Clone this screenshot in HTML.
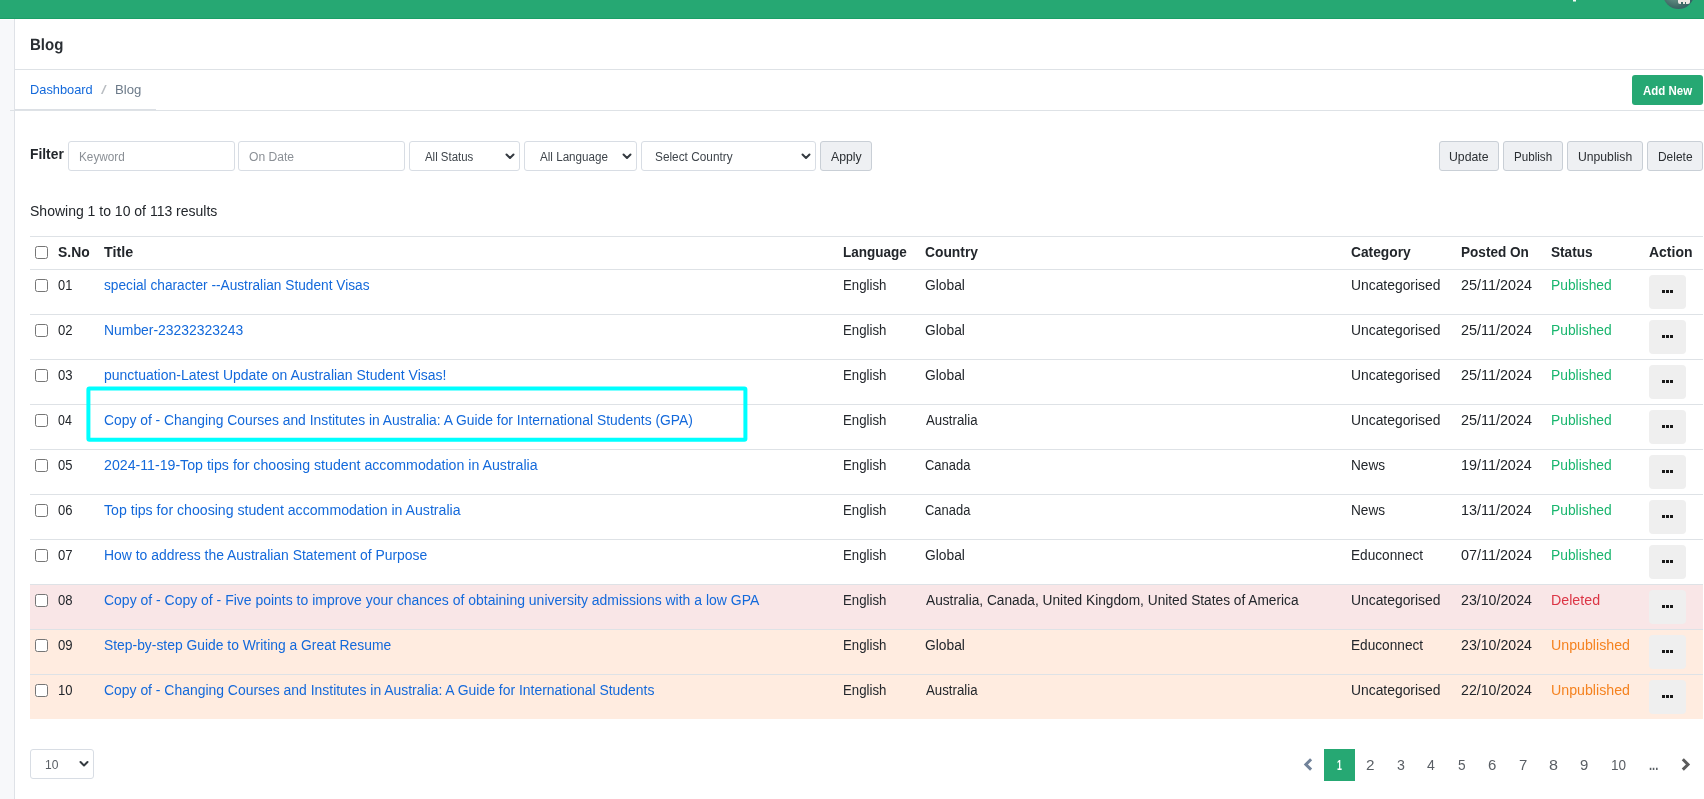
<!DOCTYPE html>
<html><head><meta charset="utf-8"><title>Blog</title>
<style>
html,body{margin:0;padding:0;background:#fff;}
body{width:1704px;height:799px;position:relative;overflow:hidden;font-family:"Liberation Sans",sans-serif;}
.b{position:absolute;}
.t{position:absolute;white-space:nowrap;line-height:1;transform-origin:0 50%;}
</style></head><body>
<div class="b" style="left:0px;top:0px;width:1704px;height:18px;background:#26a873"></div>
<div class="b" style="left:0px;top:18px;width:1704px;height:1px;background:#1b9f67"></div>
<div class="b" style="left:1573px;top:0px;width:3px;height:1px;background:#f4fbf8"></div>
<div class="b" style="left:1573px;top:1px;width:3px;height:1px;background:#8fd3b6"></div>
<div class="b" style="left:1662.8px;top:-22px;width:30.8px;height:30.8px;border-radius:50%;background:radial-gradient(circle at 40% 45%,#8fb0a0 0%,#5f8a80 30%,#3f6a66 60%,#2a4a5e 100%);overflow:hidden"><div class="b" style="left:15.5px;top:20px;width:11.5px;height:5.5px;background:#efe9e4;border-radius:1px 1px 2px 2px"></div><div class="b" style="left:18.6px;top:23.5px;width:1.2px;height:3px;background:#3f6a66"></div><div class="b" style="left:22.4px;top:23.5px;width:1.2px;height:3px;background:#3f6a66"></div></div>
<div class="b" style="left:0px;top:20px;width:14px;height:779px;background:#f7f8fa"></div>
<div class="b" style="left:14px;top:19px;width:1px;height:780px;background:#dfe2e7"></div>
<div class="b" style="left:15px;top:69px;width:1689px;height:1px;background:#dee2e6"></div>
<div class="b" style="left:10px;top:110px;width:1694px;height:1px;background:#dee2e6"></div>
<div class="b" style="left:15px;top:109px;width:141px;height:1px;background:#dce0e5"></div>
<div class="b" style="left:1632px;top:75px;width:71px;height:30px;background:#26a873;border-radius:3px"></div>
<div class="b" style="left:68px;top:141px;width:167px;height:30px;border:1px solid #d8dde4;border-radius:3px;box-sizing:border-box;background:#fff"></div>
<div class="b" style="left:238px;top:141px;width:167px;height:30px;border:1px solid #d8dde4;border-radius:3px;box-sizing:border-box;background:#fff"></div>
<div class="b" style="left:409px;top:141px;width:111px;height:30px;border:1px solid #d8dde4;border-radius:3px;box-sizing:border-box;background:#fff"></div>
<div class="b" style="left:524px;top:141px;width:113px;height:30px;border:1px solid #d8dde4;border-radius:3px;box-sizing:border-box;background:#fff"></div>
<div class="b" style="left:641px;top:141px;width:175px;height:30px;border:1px solid #d8dde4;border-radius:3px;box-sizing:border-box;background:#fff"></div>
<div class="b" style="left:820px;top:141px;width:52px;height:30px;border:1px solid #c9cfd6;border-radius:3px;box-sizing:border-box;background:#eef0f3"></div>
<div class="b" style="left:1439px;top:141px;width:60px;height:30px;border:1px solid #c9cfd6;border-radius:3px;box-sizing:border-box;background:#eef0f3"></div>
<div class="b" style="left:1503px;top:141px;width:60px;height:30px;border:1px solid #c9cfd6;border-radius:3px;box-sizing:border-box;background:#eef0f3"></div>
<div class="b" style="left:1567px;top:141px;width:76px;height:30px;border:1px solid #c9cfd6;border-radius:3px;box-sizing:border-box;background:#eef0f3"></div>
<div class="b" style="left:1647px;top:141px;width:56px;height:30px;border:1px solid #c9cfd6;border-radius:3px;box-sizing:border-box;background:#eef0f3"></div>
<div class="b" style="left:30px;top:584px;width:1673px;height:45px;background:#f9e6e7"></div>
<div class="b" style="left:30px;top:629px;width:1673px;height:90px;background:#ffece0"></div>
<div class="b" style="left:30px;top:236px;width:1673px;height:1px;background:#dee2e6"></div>
<div class="b" style="left:30px;top:269px;width:1673px;height:1px;background:#dee2e6"></div>
<div class="b" style="left:30px;top:314px;width:1673px;height:1px;background:#dee2e6"></div>
<div class="b" style="left:30px;top:359px;width:1673px;height:1px;background:#dee2e6"></div>
<div class="b" style="left:30px;top:404px;width:1673px;height:1px;background:#dee2e6"></div>
<div class="b" style="left:30px;top:449px;width:1673px;height:1px;background:#dee2e6"></div>
<div class="b" style="left:30px;top:494px;width:1673px;height:1px;background:#dee2e6"></div>
<div class="b" style="left:30px;top:539px;width:1673px;height:1px;background:#dee2e6"></div>
<div class="b" style="left:30px;top:584px;width:1673px;height:1px;background:#dee2e6"></div>
<div class="b" style="left:30px;top:629px;width:1673px;height:1px;background:#dee2e6"></div>
<div class="b" style="left:30px;top:674px;width:1673px;height:1px;background:#dee2e6"></div>
<div class="b" style="left:35px;top:246px;width:13px;height:13px;border:1px solid #767676;border-radius:2.5px;box-sizing:border-box;background:#fff"></div>
<div class="b" style="left:35px;top:279px;width:13px;height:13px;border:1px solid #767676;border-radius:2.5px;box-sizing:border-box;background:#fff"></div>
<div class="b" style="left:1649px;top:275px;width:37px;height:34px;background:#efefef;border-radius:4px"></div>
<div class="b" style="left:1662.0px;top:290px;width:3.2px;height:3px;background:#1a1a1a"></div>
<div class="b" style="left:1666.15px;top:290px;width:3.2px;height:3px;background:#1a1a1a"></div>
<div class="b" style="left:1670.3px;top:290px;width:3.2px;height:3px;background:#1a1a1a"></div>
<div class="b" style="left:35px;top:324px;width:13px;height:13px;border:1px solid #767676;border-radius:2.5px;box-sizing:border-box;background:#fff"></div>
<div class="b" style="left:1649px;top:320px;width:37px;height:34px;background:#efefef;border-radius:4px"></div>
<div class="b" style="left:1662.0px;top:335px;width:3.2px;height:3px;background:#1a1a1a"></div>
<div class="b" style="left:1666.15px;top:335px;width:3.2px;height:3px;background:#1a1a1a"></div>
<div class="b" style="left:1670.3px;top:335px;width:3.2px;height:3px;background:#1a1a1a"></div>
<div class="b" style="left:35px;top:369px;width:13px;height:13px;border:1px solid #767676;border-radius:2.5px;box-sizing:border-box;background:#fff"></div>
<div class="b" style="left:1649px;top:365px;width:37px;height:34px;background:#efefef;border-radius:4px"></div>
<div class="b" style="left:1662.0px;top:380px;width:3.2px;height:3px;background:#1a1a1a"></div>
<div class="b" style="left:1666.15px;top:380px;width:3.2px;height:3px;background:#1a1a1a"></div>
<div class="b" style="left:1670.3px;top:380px;width:3.2px;height:3px;background:#1a1a1a"></div>
<div class="b" style="left:35px;top:414px;width:13px;height:13px;border:1px solid #767676;border-radius:2.5px;box-sizing:border-box;background:#fff"></div>
<div class="b" style="left:1649px;top:410px;width:37px;height:34px;background:#efefef;border-radius:4px"></div>
<div class="b" style="left:1662.0px;top:425px;width:3.2px;height:3px;background:#1a1a1a"></div>
<div class="b" style="left:1666.15px;top:425px;width:3.2px;height:3px;background:#1a1a1a"></div>
<div class="b" style="left:1670.3px;top:425px;width:3.2px;height:3px;background:#1a1a1a"></div>
<div class="b" style="left:35px;top:459px;width:13px;height:13px;border:1px solid #767676;border-radius:2.5px;box-sizing:border-box;background:#fff"></div>
<div class="b" style="left:1649px;top:455px;width:37px;height:34px;background:#efefef;border-radius:4px"></div>
<div class="b" style="left:1662.0px;top:470px;width:3.2px;height:3px;background:#1a1a1a"></div>
<div class="b" style="left:1666.15px;top:470px;width:3.2px;height:3px;background:#1a1a1a"></div>
<div class="b" style="left:1670.3px;top:470px;width:3.2px;height:3px;background:#1a1a1a"></div>
<div class="b" style="left:35px;top:504px;width:13px;height:13px;border:1px solid #767676;border-radius:2.5px;box-sizing:border-box;background:#fff"></div>
<div class="b" style="left:1649px;top:500px;width:37px;height:34px;background:#efefef;border-radius:4px"></div>
<div class="b" style="left:1662.0px;top:515px;width:3.2px;height:3px;background:#1a1a1a"></div>
<div class="b" style="left:1666.15px;top:515px;width:3.2px;height:3px;background:#1a1a1a"></div>
<div class="b" style="left:1670.3px;top:515px;width:3.2px;height:3px;background:#1a1a1a"></div>
<div class="b" style="left:35px;top:549px;width:13px;height:13px;border:1px solid #767676;border-radius:2.5px;box-sizing:border-box;background:#fff"></div>
<div class="b" style="left:1649px;top:545px;width:37px;height:34px;background:#efefef;border-radius:4px"></div>
<div class="b" style="left:1662.0px;top:560px;width:3.2px;height:3px;background:#1a1a1a"></div>
<div class="b" style="left:1666.15px;top:560px;width:3.2px;height:3px;background:#1a1a1a"></div>
<div class="b" style="left:1670.3px;top:560px;width:3.2px;height:3px;background:#1a1a1a"></div>
<div class="b" style="left:35px;top:594px;width:13px;height:13px;border:1px solid #767676;border-radius:2.5px;box-sizing:border-box;background:#fff"></div>
<div class="b" style="left:1649px;top:590px;width:37px;height:34px;background:#efefef;border-radius:4px"></div>
<div class="b" style="left:1662.0px;top:605px;width:3.2px;height:3px;background:#1a1a1a"></div>
<div class="b" style="left:1666.15px;top:605px;width:3.2px;height:3px;background:#1a1a1a"></div>
<div class="b" style="left:1670.3px;top:605px;width:3.2px;height:3px;background:#1a1a1a"></div>
<div class="b" style="left:35px;top:639px;width:13px;height:13px;border:1px solid #767676;border-radius:2.5px;box-sizing:border-box;background:#fff"></div>
<div class="b" style="left:1649px;top:635px;width:37px;height:34px;background:#efefef;border-radius:4px"></div>
<div class="b" style="left:1662.0px;top:650px;width:3.2px;height:3px;background:#1a1a1a"></div>
<div class="b" style="left:1666.15px;top:650px;width:3.2px;height:3px;background:#1a1a1a"></div>
<div class="b" style="left:1670.3px;top:650px;width:3.2px;height:3px;background:#1a1a1a"></div>
<div class="b" style="left:35px;top:684px;width:13px;height:13px;border:1px solid #767676;border-radius:2.5px;box-sizing:border-box;background:#fff"></div>
<div class="b" style="left:1649px;top:680px;width:37px;height:34px;background:#efefef;border-radius:4px"></div>
<div class="b" style="left:1662.0px;top:695px;width:3.2px;height:3px;background:#1a1a1a"></div>
<div class="b" style="left:1666.15px;top:695px;width:3.2px;height:3px;background:#1a1a1a"></div>
<div class="b" style="left:1670.3px;top:695px;width:3.2px;height:3px;background:#1a1a1a"></div>
<div class="b" style="left:30px;top:749px;width:64px;height:30px;border:1px solid #d8dde4;border-radius:3px;box-sizing:border-box;background:#fff"></div>
<div class="b" style="left:1324px;top:749px;width:31px;height:32px;background:#26a873"></div>
<svg class="b" style="left:0;top:0" width="1704" height="799" viewBox="0 0 1704 799" fill="none">
<g stroke="#343a40" stroke-width="2" stroke-linecap="round" stroke-linejoin="round">
<path d="M506.5 154.5 L510 158 L513.5 154.5"/>
<path d="M623.5 154.5 L627 158 L630.5 154.5"/>
<path d="M802.5 154.5 L806 158 L809.5 154.5"/>
<path d="M80.5 762 L84 765.5 L87.5 762"/>
</g>
<path d="M1311.1 759.3 L1305.9 764.45 L1311.1 769.6" stroke="#72839a" stroke-width="3" stroke-linecap="butt" stroke-linejoin="miter"/>
<path d="M1682.8 759.3 L1688 764.45 L1682.8 769.6" stroke="#5b5b5b" stroke-width="3" stroke-linecap="butt" stroke-linejoin="miter"/>
<rect x="88.4" y="388.4" width="657" height="51.3" stroke="#00ffff" stroke-width="4" rx="1"/>
</svg>
<div class="b" style="left:0;top:0;width:1704px;height:799px;will-change:transform">
<span class="t" style="left:30px;top:36px;font-size:16.2px;font-weight:700;color:#2a2e33;transform:scaleX(0.9283) rotate(0.03deg)">Blog</span>
<span class="t" style="left:30px;top:83px;font-size:13.5px;font-weight:400;color:#1369db;transform:scaleX(0.9489)">Dashboard</span>
<span class="t" style="left:101px;top:83px;font-size:13.5px;font-weight:400;color:#b9bdc2;transform:scaleX(1.5162)">/</span>
<span class="t" style="left:115px;top:83px;font-size:13.5px;font-weight:400;color:#6c7a89;transform:scaleX(0.9745)">Blog</span>
<span class="t" style="left:1643px;top:84px;font-size:13px;font-weight:700;color:#ffffff;transform:scaleX(0.8825)">Add New</span>
<span class="t" style="left:30px;top:147px;font-size:14px;font-weight:700;color:#22262b;transform:scaleX(0.9868)">Filter</span>
<span class="t" style="left:79px;top:151px;font-size:12.3px;font-weight:400;color:#8b9096;transform:scaleX(0.9568)">Keyword</span>
<span class="t" style="left:249px;top:151px;font-size:12.3px;font-weight:400;color:#8b9096;transform:scaleX(0.9841)">On Date</span>
<span class="t" style="left:425px;top:151px;font-size:12.5px;font-weight:400;color:#3f454b;transform:scaleX(0.9136)">All Status</span>
<span class="t" style="left:540px;top:151px;font-size:12.5px;font-weight:400;color:#3f454b;transform:scaleX(0.9308)">All Language</span>
<span class="t" style="left:655px;top:151px;font-size:12.5px;font-weight:400;color:#3f454b;transform:scaleX(0.9466)">Select Country</span>
<span class="t" style="left:831px;top:150px;font-size:13px;font-weight:400;color:#2b2f33;transform:scaleX(0.9451)">Apply</span>
<span class="t" style="left:1449px;top:150px;font-size:13px;font-weight:400;color:#2b2f33;transform:scaleX(0.9443)">Update</span>
<span class="t" style="left:1514px;top:150px;font-size:13px;font-weight:400;color:#2b2f33;transform:scaleX(0.8949)">Publish</span>
<span class="t" style="left:1578px;top:150px;font-size:13px;font-weight:400;color:#2b2f33;transform:scaleX(0.9371)">Unpublish</span>
<span class="t" style="left:1658px;top:150px;font-size:13px;font-weight:400;color:#2b2f33;transform:scaleX(0.9187)">Delete</span>
<span class="t" style="left:30px;top:204px;font-size:14px;font-weight:400;color:#22262b;transform:scaleX(1.0003)">Showing 1 to 10 of 113 results</span>
<span class="t" style="left:58px;top:245px;font-size:14px;font-weight:700;color:#22262b;transform:scaleX(0.9925)">S.No</span>
<span class="t" style="left:104px;top:245px;font-size:14px;font-weight:700;color:#22262b;transform:scaleX(1.0224)">Title</span>
<span class="t" style="left:843px;top:245px;font-size:14px;font-weight:700;color:#22262b;transform:scaleX(0.9651)">Language</span>
<span class="t" style="left:925px;top:245px;font-size:14px;font-weight:700;color:#22262b;transform:scaleX(0.9874)">Country</span>
<span class="t" style="left:1351px;top:245px;font-size:14px;font-weight:700;color:#22262b;transform:scaleX(0.9833)">Category</span>
<span class="t" style="left:1461px;top:245px;font-size:14px;font-weight:700;color:#22262b;transform:scaleX(0.9691)">Posted On</span>
<span class="t" style="left:1551px;top:245px;font-size:14px;font-weight:700;color:#22262b;transform:scaleX(0.9732)">Status</span>
<span class="t" style="left:1649px;top:245px;font-size:14px;font-weight:700;color:#22262b;transform:scaleX(0.9978)">Action</span>
<span class="t" style="left:58px;top:278px;font-size:14px;font-weight:400;color:#22262b;transform:scaleX(0.9157)">01</span>
<span class="t" style="left:104px;top:278px;font-size:14px;font-weight:400;color:#1369db;transform:scaleX(0.9787)">special character --Australian Student Visas</span>
<span class="t" style="left:843px;top:278px;font-size:14px;font-weight:400;color:#22262b;transform:scaleX(0.9458)">English</span>
<span class="t" style="left:925px;top:278px;font-size:14px;font-weight:400;color:#22262b;transform:scaleX(0.9868)">Global</span>
<span class="t" style="left:1351px;top:278px;font-size:14px;font-weight:400;color:#22262b;transform:scaleX(0.9902)">Uncategorised</span>
<span class="t" style="left:1461px;top:278px;font-size:14px;font-weight:400;color:#22262b;transform:scaleX(1.0271)">25/11/2024</span>
<span class="t" style="left:1551px;top:278px;font-size:14px;font-weight:400;color:#19b66e;transform:scaleX(0.9880)">Published</span>
<span class="t" style="left:58px;top:323px;font-size:14px;font-weight:400;color:#22262b;transform:scaleX(0.9379)">02</span>
<span class="t" style="left:104px;top:323px;font-size:14px;font-weight:400;color:#1369db;transform:scaleX(0.9939)">Number-23232323243</span>
<span class="t" style="left:843px;top:323px;font-size:14px;font-weight:400;color:#22262b;transform:scaleX(0.9458)">English</span>
<span class="t" style="left:925px;top:323px;font-size:14px;font-weight:400;color:#22262b;transform:scaleX(0.9868)">Global</span>
<span class="t" style="left:1351px;top:323px;font-size:14px;font-weight:400;color:#22262b;transform:scaleX(0.9902)">Uncategorised</span>
<span class="t" style="left:1461px;top:323px;font-size:14px;font-weight:400;color:#22262b;transform:scaleX(1.0271)">25/11/2024</span>
<span class="t" style="left:1551px;top:323px;font-size:14px;font-weight:400;color:#19b66e;transform:scaleX(0.9880)">Published</span>
<span class="t" style="left:58px;top:368px;font-size:14px;font-weight:400;color:#22262b;transform:scaleX(0.9372)">03</span>
<span class="t" style="left:104px;top:368px;font-size:14px;font-weight:400;color:#1369db;transform:scaleX(0.9983)">punctuation-Latest Update on Australian Student Visas!</span>
<span class="t" style="left:843px;top:368px;font-size:14px;font-weight:400;color:#22262b;transform:scaleX(0.9458)">English</span>
<span class="t" style="left:925px;top:368px;font-size:14px;font-weight:400;color:#22262b;transform:scaleX(0.9868)">Global</span>
<span class="t" style="left:1351px;top:368px;font-size:14px;font-weight:400;color:#22262b;transform:scaleX(0.9902)">Uncategorised</span>
<span class="t" style="left:1461px;top:368px;font-size:14px;font-weight:400;color:#22262b;transform:scaleX(1.0271)">25/11/2024</span>
<span class="t" style="left:1551px;top:368px;font-size:14px;font-weight:400;color:#19b66e;transform:scaleX(0.9880)">Published</span>
<span class="t" style="left:58px;top:413px;font-size:14px;font-weight:400;color:#22262b;transform:scaleX(0.8891)">04</span>
<span class="t" style="left:104px;top:413px;font-size:14px;font-weight:400;color:#1369db;transform:scaleX(0.9897)">Copy of - Changing Courses and Institutes in Australia: A Guide for International Students (GPA)</span>
<span class="t" style="left:843px;top:413px;font-size:14px;font-weight:400;color:#22262b;transform:scaleX(0.9458)">English</span>
<span class="t" style="left:926px;top:413px;font-size:14px;font-weight:400;color:#22262b;transform:scaleX(0.9473)">Australia</span>
<span class="t" style="left:1351px;top:413px;font-size:14px;font-weight:400;color:#22262b;transform:scaleX(0.9902)">Uncategorised</span>
<span class="t" style="left:1461px;top:413px;font-size:14px;font-weight:400;color:#22262b;transform:scaleX(1.0271)">25/11/2024</span>
<span class="t" style="left:1551px;top:413px;font-size:14px;font-weight:400;color:#19b66e;transform:scaleX(0.9880)">Published</span>
<span class="t" style="left:58px;top:458px;font-size:14px;font-weight:400;color:#22262b;transform:scaleX(0.9275)">05</span>
<span class="t" style="left:104px;top:458px;font-size:14px;font-weight:400;color:#1369db;transform:scaleX(1.0118)">2024-11-19-Top tips for choosing student accommodation in Australia</span>
<span class="t" style="left:843px;top:458px;font-size:14px;font-weight:400;color:#22262b;transform:scaleX(0.9458)">English</span>
<span class="t" style="left:925px;top:458px;font-size:14px;font-weight:400;color:#22262b;transform:scaleX(0.9252)">Canada</span>
<span class="t" style="left:1351px;top:458px;font-size:14px;font-weight:400;color:#22262b;transform:scaleX(0.9733)">News</span>
<span class="t" style="left:1461px;top:458px;font-size:14px;font-weight:400;color:#22262b;transform:scaleX(1.0262)">19/11/2024</span>
<span class="t" style="left:1551px;top:458px;font-size:14px;font-weight:400;color:#19b66e;transform:scaleX(0.9880)">Published</span>
<span class="t" style="left:58px;top:503px;font-size:14px;font-weight:400;color:#22262b;transform:scaleX(0.9314)">06</span>
<span class="t" style="left:104px;top:503px;font-size:14px;font-weight:400;color:#1369db;transform:scaleX(1.0091)">Top tips for choosing student accommodation in Australia</span>
<span class="t" style="left:843px;top:503px;font-size:14px;font-weight:400;color:#22262b;transform:scaleX(0.9458)">English</span>
<span class="t" style="left:925px;top:503px;font-size:14px;font-weight:400;color:#22262b;transform:scaleX(0.9252)">Canada</span>
<span class="t" style="left:1351px;top:503px;font-size:14px;font-weight:400;color:#22262b;transform:scaleX(0.9733)">News</span>
<span class="t" style="left:1461px;top:503px;font-size:14px;font-weight:400;color:#22262b;transform:scaleX(1.0262)">13/11/2024</span>
<span class="t" style="left:1551px;top:503px;font-size:14px;font-weight:400;color:#19b66e;transform:scaleX(0.9880)">Published</span>
<span class="t" style="left:58px;top:548px;font-size:14px;font-weight:400;color:#22262b;transform:scaleX(0.9379)">07</span>
<span class="t" style="left:104px;top:548px;font-size:14px;font-weight:400;color:#1369db;transform:scaleX(0.9938)">How to address the Australian Statement of Purpose</span>
<span class="t" style="left:843px;top:548px;font-size:14px;font-weight:400;color:#22262b;transform:scaleX(0.9458)">English</span>
<span class="t" style="left:925px;top:548px;font-size:14px;font-weight:400;color:#22262b;transform:scaleX(0.9868)">Global</span>
<span class="t" style="left:1351px;top:548px;font-size:14px;font-weight:400;color:#22262b;transform:scaleX(0.9748)">Educonnect</span>
<span class="t" style="left:1461px;top:548px;font-size:14px;font-weight:400;color:#22262b;transform:scaleX(1.0270)">07/11/2024</span>
<span class="t" style="left:1551px;top:548px;font-size:14px;font-weight:400;color:#19b66e;transform:scaleX(0.9880)">Published</span>
<span class="t" style="left:58px;top:593px;font-size:14px;font-weight:400;color:#22262b;transform:scaleX(0.9353)">08</span>
<span class="t" style="left:104px;top:593px;font-size:14px;font-weight:400;color:#1369db;transform:scaleX(0.9981)">Copy of - Copy of - Five points to improve your chances of obtaining university admissions with a low GPA</span>
<span class="t" style="left:843px;top:593px;font-size:14px;font-weight:400;color:#22262b;transform:scaleX(0.9458)">English</span>
<span class="t" style="left:926px;top:593px;font-size:14px;font-weight:400;color:#22262b;transform:scaleX(0.9791)">Australia, Canada, United Kingdom, United States of America</span>
<span class="t" style="left:1351px;top:593px;font-size:14px;font-weight:400;color:#22262b;transform:scaleX(0.9902)">Uncategorised</span>
<span class="t" style="left:1461px;top:593px;font-size:14px;font-weight:400;color:#22262b;transform:scaleX(1.0116)">23/10/2024</span>
<span class="t" style="left:1551px;top:593px;font-size:14px;font-weight:400;color:#dc3545;transform:scaleX(1.0170)">Deleted</span>
<span class="t" style="left:58px;top:638px;font-size:14px;font-weight:400;color:#22262b;transform:scaleX(0.9376)">09</span>
<span class="t" style="left:104px;top:638px;font-size:14px;font-weight:400;color:#1369db;transform:scaleX(0.9905)">Step-by-step Guide to Writing a Great Resume</span>
<span class="t" style="left:843px;top:638px;font-size:14px;font-weight:400;color:#22262b;transform:scaleX(0.9458)">English</span>
<span class="t" style="left:925px;top:638px;font-size:14px;font-weight:400;color:#22262b;transform:scaleX(0.9868)">Global</span>
<span class="t" style="left:1351px;top:638px;font-size:14px;font-weight:400;color:#22262b;transform:scaleX(0.9748)">Educonnect</span>
<span class="t" style="left:1461px;top:638px;font-size:14px;font-weight:400;color:#22262b;transform:scaleX(1.0116)">23/10/2024</span>
<span class="t" style="left:1551px;top:638px;font-size:14px;font-weight:400;color:#f5821f;transform:scaleX(1.0144)">Unpublished</span>
<span class="t" style="left:58px;top:683px;font-size:14px;font-weight:400;color:#22262b;transform:scaleX(0.9319)">10</span>
<span class="t" style="left:104px;top:683px;font-size:14px;font-weight:400;color:#1369db;transform:scaleX(0.9947)">Copy of - Changing Courses and Institutes in Australia: A Guide for International Students</span>
<span class="t" style="left:843px;top:683px;font-size:14px;font-weight:400;color:#22262b;transform:scaleX(0.9458)">English</span>
<span class="t" style="left:926px;top:683px;font-size:14px;font-weight:400;color:#22262b;transform:scaleX(0.9473)">Australia</span>
<span class="t" style="left:1351px;top:683px;font-size:14px;font-weight:400;color:#22262b;transform:scaleX(0.9902)">Uncategorised</span>
<span class="t" style="left:1461px;top:683px;font-size:14px;font-weight:400;color:#22262b;transform:scaleX(1.0116)">22/10/2024</span>
<span class="t" style="left:1551px;top:683px;font-size:14px;font-weight:400;color:#f5821f;transform:scaleX(1.0144)">Unpublished</span>
<span class="t" style="left:1337px;top:758px;font-size:14px;font-weight:700;color:#ffffff;transform:scaleX(0.6262)">1</span>
<span class="t" style="left:1366px;top:758px;font-size:14px;font-weight:400;color:#595e64;transform:scaleX(1.0912)">2</span>
<span class="t" style="left:1397px;top:758px;font-size:14px;font-weight:400;color:#595e64;transform:scaleX(1.0141)">3</span>
<span class="t" style="left:1427px;top:758px;font-size:14px;font-weight:400;color:#595e64;transform:scaleX(1.0089)">4</span>
<span class="t" style="left:1458px;top:758px;font-size:14px;font-weight:400;color:#595e64;transform:scaleX(0.9788)">5</span>
<span class="t" style="left:1488px;top:758px;font-size:14px;font-weight:400;color:#595e64;transform:scaleX(1.0693)">6</span>
<span class="t" style="left:1519px;top:758px;font-size:14px;font-weight:400;color:#595e64;transform:scaleX(1.0658)">7</span>
<span class="t" style="left:1549px;top:758px;font-size:14px;font-weight:400;color:#595e64;transform:scaleX(1.1520)">8</span>
<span class="t" style="left:1580px;top:758px;font-size:14px;font-weight:400;color:#595e64;transform:scaleX(1.0649)">9</span>
<span class="t" style="left:1611px;top:758px;font-size:14px;font-weight:400;color:#595e64;transform:scaleX(0.9679)">10</span>
<span class="t" style="left:1649px;top:758px;font-size:14px;font-weight:700;color:#595e64;transform:scaleX(0.8017)">...</span>
<span class="t" style="left:45px;top:759px;font-size:12.3px;font-weight:400;color:#595e64;transform:scaleX(0.9818)">10</span>
</div>
</body></html>
